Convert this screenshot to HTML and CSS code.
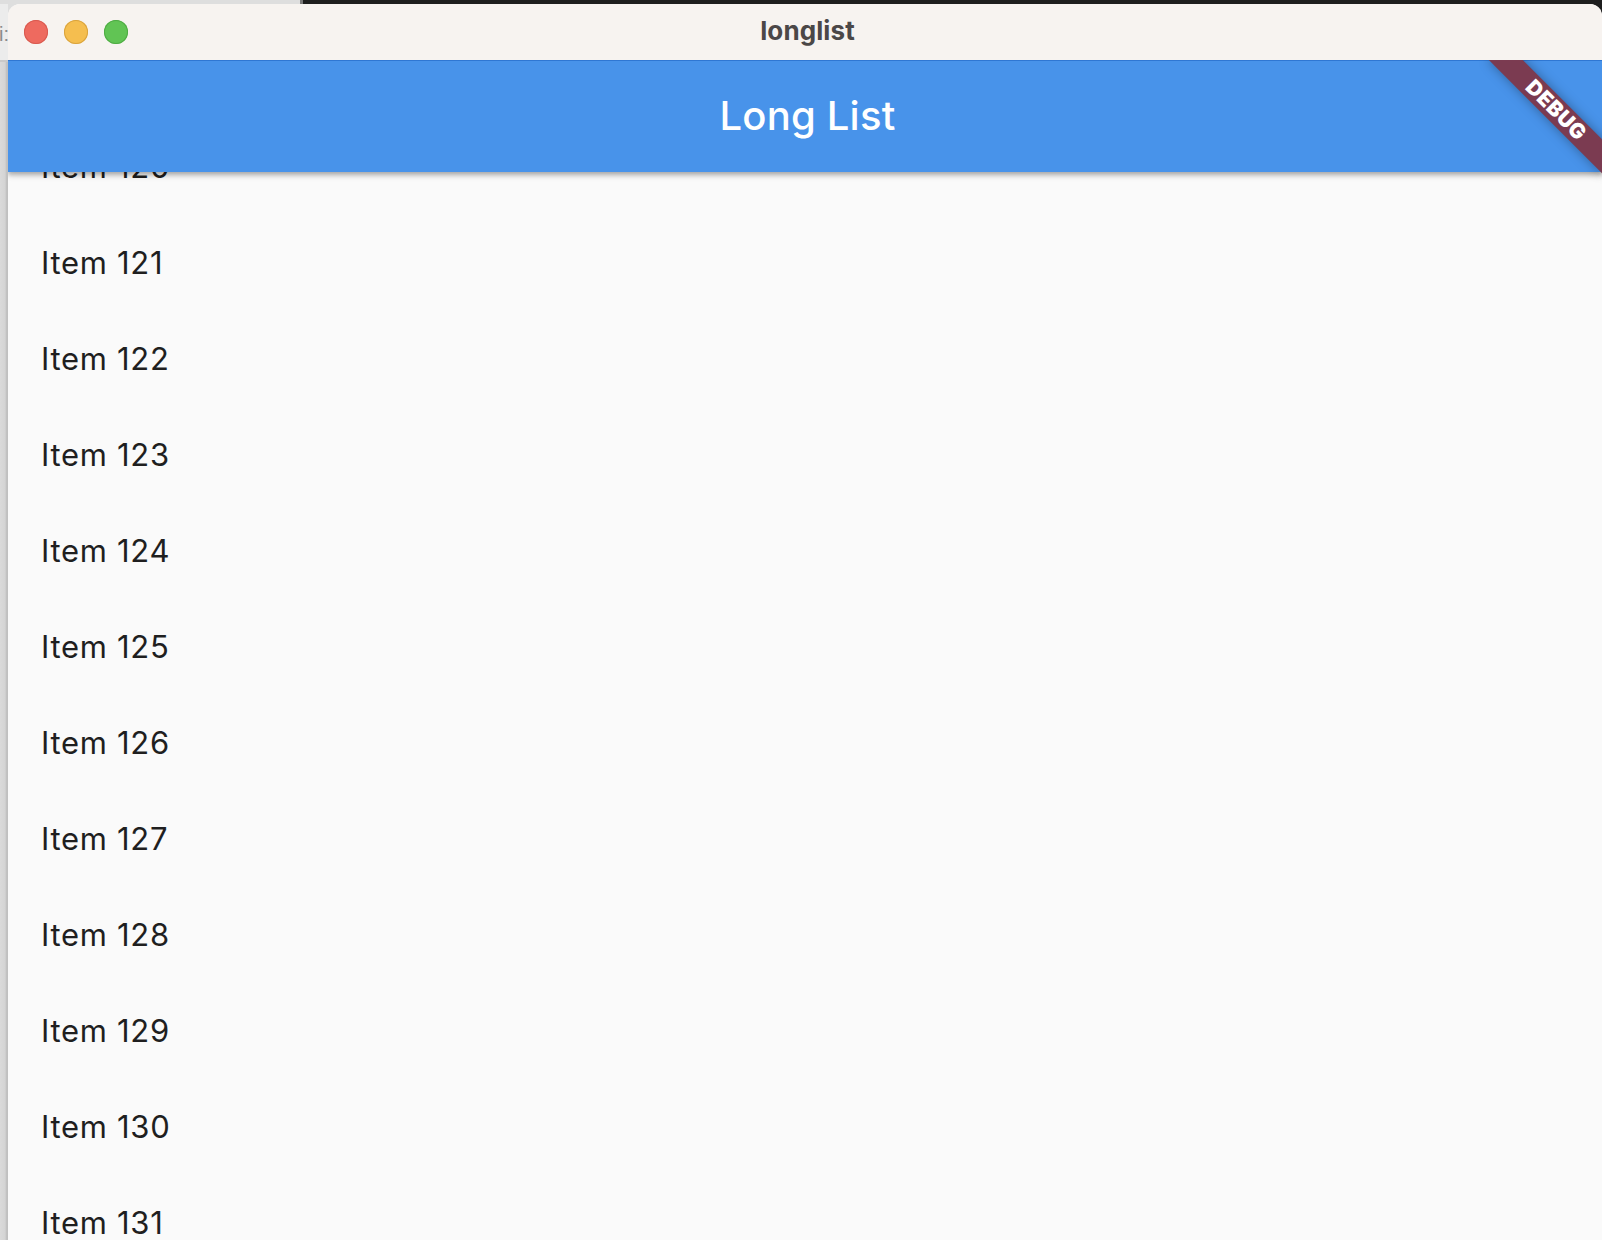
FILE: index.html
```html
<!DOCTYPE html>
<html>
<head>
<meta charset="utf-8">
<link rel="stylesheet" href="styles.css">
</head>
<body>
<div class="screen">
  <div class="sliver">
    <div class="sliver-top"><span class="peek">i:</span></div>
    <div class="sliver-rest"></div>
  </div>
  <div class="window">
    <div class="titlebar">
      <div class="lights">
        <span class="light red"></span>
        <span class="light yellow"></span>
        <span class="light green"></span>
      </div>
      <div class="wtitle">longlist</div>
    </div>
    <div class="app">
      <header class="appbar"><h1 class="apptitle">Long List</h1></header>
      <ul class="list">
        <li class="row">Item 120</li>
        <li class="row">Item 121</li>
        <li class="row">Item 122</li>
        <li class="row">Item 123</li>
        <li class="row">Item 124</li>
        <li class="row">Item 125</li>
        <li class="row">Item 126</li>
        <li class="row">Item 127</li>
        <li class="row">Item 128</li>
        <li class="row">Item 129</li>
        <li class="row">Item 130</li>
        <li class="row">Item 131</li>
        <li class="row">Item 132</li>
      </ul>
      <div class="banner">DEBUG</div>
    </div>
  </div>
</div>
</body>
</html>
```
FILE: styles.css
```css
* { box-sizing: border-box; }
html, body { margin: 0; padding: 0; }
body {
  width: 1602px;
  height: 1240px;
  overflow: hidden;
  font-family: "Inter", "Liberation Sans", sans-serif;
}
.screen {
  display: flex;
  width: 1602px;
  height: 1240px;
  overflow: hidden;
  background:
    linear-gradient(to right, #dedede 0, #dedede 300px, #7a7a7a 300px, #7a7a7a 303px, #1e1e1e 303px) top left / 100% 30px no-repeat,
    #d8d8d8;
}
.sliver {
  width: 8px;
  flex: none;
  display: flex;
  flex-direction: column;
  margin-top: 4px;
}
.sliver-top {
  height: 58px;
  background: #ececec;
  border-bottom: 2px solid #c9c9c9;
  overflow: hidden;
}
.peek {
  display: block;
  margin: 18px 0 0 -1px;
  font-size: 20px;
  line-height: 24px;
  color: #8a8a8a;
  font-family: "Liberation Sans", sans-serif;
}
.sliver-rest {
  flex: 1;
  background: linear-gradient(to right, #dadada 0, #d4d4d4 5px, #bcbcbc 7px, #c4c4c4 8px);
}
.window {
  flex: none;
  width: 1594px;
  margin-top: 4px;
  height: 1236px;
  border-radius: 12px 12px 0 0;
  overflow: hidden;
  background: #fafafa;
  display: flex;
  flex-direction: column;
}
.titlebar {
  height: 56px;
  flex: none;
  background: #f7f3f0;
  position: relative;
  display: flex;
  align-items: center;
  justify-content: center;
  padding-left: 5px;
}
.lights {
  position: absolute;
  left: 16px;
  top: 16px;
  display: flex;
  gap: 16px;
}
.light {
  width: 24px;
  height: 24px;
  border-radius: 50%;
  display: block;
}
.red { background: #ee6a5f; box-shadow: inset 0 0 0 1px #d85a50; }
.yellow { background: #f5be4f; box-shadow: inset 0 0 0 1px #d9a33e; }
.green { background: #61c454; box-shadow: inset 0 0 0 1px #4fab44; }
.wtitle {
  font-size: 26px;
  font-weight: 700;
  color: #4b4747;
  margin-top: -3px;
  letter-spacing: 0.1px;
}
.app {
  flex: 1;
  position: relative;
  overflow: hidden;
  background: #fafafa;
}
.appbar {
  position: relative;
  z-index: 2;
  height: 112px;
  background: #4893ea;
  border-top: 1px solid #2f77d3;
  display: flex;
  align-items: center;
  justify-content: center;
  padding-left: 5px;
  box-shadow: 0 4px 5px rgba(0,0,0,0.14), 0 1px 10px rgba(0,0,0,0.10), 0 2px 4px rgba(0,0,0,0.16);
}
.apptitle {
  margin: -3px 0 0 0;
  font-size: 40px;
  font-weight: 500;
  color: #ffffff;
  letter-spacing: 0.2px;
}
.list {
  list-style: none;
  margin: -54px 0 0 0;
  padding: 0;
  position: relative;
  z-index: 1;
}
.row {
  height: 96px;
  display: flex;
  align-items: center;
  padding-left: 33px;
  font-size: 31px;
  color: #1f1f1f;
  letter-spacing: 0.7px;
}
.banner {
  position: absolute;
  z-index: 3;
  right: -80px;
  top: 56px;
  width: 160px;
  height: 24px;
  transform-origin: 80px -56px;
  transform: rotate(45deg);
  background: #7b3b51;
  box-shadow: 0 0 12px rgba(0,0,0,0.35);
  color: #ffffff;
  font-size: 21px;
  font-weight: 900;
  line-height: 24px;
  text-align: center;
  letter-spacing: 0.5px;
  padding-left: 6px;
}
```
